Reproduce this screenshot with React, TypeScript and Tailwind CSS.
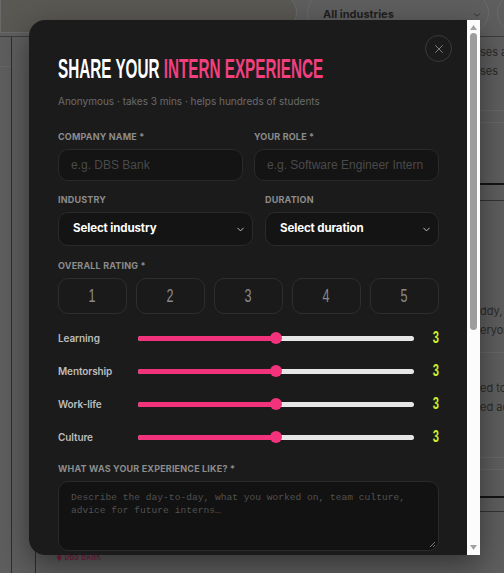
import { X, ChevronDown } from "lucide-react";

const condensed = "font-['Liberation_Sans',sans-serif]";

function Background() {
  return (
    <div className="flex h-full flex-col bg-[#5e5e5e] font-['Inter',sans-serif]">
      {/* filter bar */}
      <div className="flex h-[37px] shrink-0 items-end border-b border-[#3c3c3c]">
        <div className="mb-[3px] h-[40px] w-[297px] shrink-0 rounded-r-full border border-[#6a6a6a] bg-[#595853]" />
        <div className="mb-[3px] ml-[10px] flex h-[40px] w-[182px] shrink-0 items-center justify-between rounded-full border border-[#6a6a6a] pl-[15px] pr-[6px] pt-[3px]">
          <span className="text-[11px] font-bold text-[#1f1f1f]">All industries</span>
          <ChevronDown className="h-[10px] w-[10px] text-[#2a2a2a]" strokeWidth={2} />
        </div>
        <div className="mb-[3px] ml-[8px] h-[40px] w-[40px] shrink-0 rounded-l-full border border-[#6a6a6a]" />
      </div>

      <div className="flex flex-1">
        <div className="w-[12px] shrink-0 border-r border-[#2e2e2e]">
          <div className="h-[30px] border-b border-[#666]" />
        </div>
        <div className="w-[24px] shrink-0 border-r border-[#2e2e2e]" />
        <div className="flex flex-1 flex-col">
          <div className="ml-[444px] flex flex-col overflow-hidden whitespace-nowrap text-[11px] leading-[19px] text-[#2a2a2a]">
            <div className="pt-[6px]">ses a</div>
            <div>ses</div>
            <div className="mt-[29px] border-t border-[#676767]" />
            <div className="mt-[11px] border-t border-[#676767]" />
            <div className="mt-[60px] h-[2px] bg-[#141414]" />
            <div className="mt-[15px] border-t border-[#333]" />
            <div className="mt-[101px]">ddy,</div>
            <div>eryor</div>
            <div className="mt-[12px] border-t border-[#676767]" />
            <div className="mt-[26px]">ed to</div>
            <div>ed ac</div>
            <div className="mt-[40px] border-t border-[#676767]" />
            <div className="mt-[11px] border-t border-[#676767]" />
            <div className="mt-[26px] h-[2px] bg-[#141414]" />
            <div className="mt-[13px] border-t border-[#333]" />
          </div>
          <div className="ml-[21px] mt-auto pb-[7px]">
            <span className={`${condensed} inline-block origin-left scale-x-[0.62] whitespace-nowrap text-[10px] font-bold tracking-[0.08em] text-[#7f2446]`}>
              ◆ DBS BANK
            </span>
          </div>
        </div>
      </div>
    </div>
  );
}

function Label({ children }: { children: React.ReactNode }) {
  return (
    <div className="mb-[7px] text-[9px] font-bold uppercase leading-[11px] tracking-[0.02em] text-[#8c8c8c]">
      {children}
    </div>
  );
}

function ScrollBar() {
  return (
    <div className="flex w-[13px] shrink-0 flex-col items-center bg-[#fcfcfc] py-[5px]">
      <svg width="7" height="5" viewBox="0 0 7 5">
        <path d="M3.5 0L7 5H0z" fill="#a3a3a3" />
      </svg>
      <div className="mt-[3px] h-[297px] w-[7px] rounded-full bg-[#9d9d9d]" />
      <div className="flex-1" />
      <svg width="7" height="5" viewBox="0 0 7 5">
        <path d="M0 0h7L3.5 5z" fill="#a3a3a3" />
      </svg>
    </div>
  );
}

const sliders = ["Learning", "Mentorship", "Work-life", "Culture"];

const inputBox =
  "flex h-[32px] items-center rounded-[10px] border border-[#2a2a2a] bg-[#141414] px-[12px] font-['Liberation_Sans',sans-serif] text-[12px] text-[#4a4a4a]";
const selectBox =
  "flex h-[34px] items-center justify-between rounded-[10px] border border-[#2a2a2a] bg-[#141414] pl-[14px] pr-[6px] text-[11.5px] font-bold tracking-[-0.01em] text-white";

export default function App() {
  return (
    <div className="relative h-[573px] w-[504px] overflow-hidden">
      <Background />

      <div className="absolute left-[29px] top-[20px] flex h-[535px] w-[451px] shadow-[0_10px_30px_rgba(0,0,0,0.45)] rounded-l-2xl">
        <div className="relative w-[438px] shrink-0 overflow-hidden rounded-l-2xl bg-[#1b1b1b] pl-[29px] pr-[28px] pt-[36px] font-['Inter',sans-serif]">
          <button className="absolute right-[15px] top-[15px] flex h-[27px] w-[27px] items-center justify-center rounded-full border border-[#3a3a3a] text-[#8a8a8a]">
            <X className="h-[14px] w-[14px]" strokeWidth={1.5} />
          </button>

          <h2 className={`${condensed} origin-left scale-x-[0.545] whitespace-nowrap text-[28px] font-bold leading-[26px] text-white`}>
            SHARE YOUR <span className="text-[#f2407f]">INTERN EXPERIENCE</span>
          </h2>
          <p className="mt-[12px] text-[10px] leading-[14px] text-[#6b6b6b]">
            Anonymous · takes 3 mins · helps hundreds of students
          </p>

          <div className="mt-[23px] grid grid-cols-2 gap-[11px]">
            <div>
              <Label>Company name *</Label>
              <div className={inputBox}>e.g. DBS Bank</div>
            </div>
            <div>
              <Label>Your role *</Label>
              <div className={inputBox}>e.g. Software Engineer Intern</div>
            </div>
          </div>

          <div className="mt-[13px] flex gap-[12px]">
            <div className="w-[195px]">
              <Label>Industry</Label>
              <div className={selectBox}>
                Select industry
                <ChevronDown className="h-[11px] w-[11px] text-[#cfcfcf]" strokeWidth={2} />
              </div>
            </div>
            <div className="flex-1">
              <Label>Duration</Label>
              <div className={selectBox}>
                Select duration
                <ChevronDown className="h-[11px] w-[11px] text-[#cfcfcf]" strokeWidth={2} />
              </div>
            </div>
          </div>

          <div className="mt-[14px]">
            <Label>Overall rating *</Label>
            <div className="grid grid-cols-5 gap-[9px]">
              {[1, 2, 3, 4, 5].map((n) => (
                <div
                  key={n}
                  className={`${condensed} flex h-[36px] items-center justify-center rounded-[10px] border border-[#2e2e2e] bg-[#1a1a1a] text-[18px] text-[#8a8a8a]`}
                >
                  <span className="inline-block scale-x-[0.7]">{n}</span>
                </div>
              ))}
            </div>
          </div>

          <div className="mt-[17px] flex flex-col gap-[19px]">
            {sliders.map((s) => (
              <div key={s} className="flex h-[14px] items-center">
                <span className="w-[80px] shrink-0 text-[10px] font-semibold tracking-[-0.01em] text-[#bdbdbd]">{s}</span>
                <div className="relative h-[5px] flex-1 rounded-full bg-[#e6e6e6]">
                  <div className="h-full w-1/2 rounded-full bg-[#f2327a]" />
                  <div className="absolute left-1/2 top-1/2 h-[12px] w-[12px] -translate-x-1/2 -translate-y-1/2 rounded-full bg-[#f2327a]" />
                </div>
                <span className={`${condensed} w-[25px] shrink-0 text-right text-[16px] font-bold text-[#c8ee2c]`}>
                  <span className="inline-block origin-right scale-x-[0.7]">3</span>
                </span>
              </div>
            ))}
          </div>

          <div className="mt-[19px]">
            <Label>What was your experience like? *</Label>
            <div className="relative h-[70px] rounded-[10px] border border-[#2a2a2a] bg-[#121212] px-[12px] pt-[9px] font-['Liberation_Mono',monospace] text-[9.6px] leading-[13px] text-[#515151]">
              Describe the day-to-day, what you worked on, team culture,
              <br />
              advice for future interns…
              <svg className="absolute bottom-[2px] right-[2px]" width="7" height="7" viewBox="0 0 7 7">
                <path d="M6 1L1 6M6 4L4 6" stroke="#777" strokeWidth="1" />
              </svg>
            </div>
          </div>

          <div className="mt-[16px]">
            <Label>Would you recommend it? *</Label>
            <div className="grid grid-cols-3 gap-[9px]">
              {["Yes", "Maybe", "No"].map((o) => (
                <div key={o} className="flex h-[34px] items-center justify-center rounded-[10px] border border-[#2e2e2e] text-[12px] font-semibold text-[#8a8a8a]">
                  {o}
                </div>
              ))}
            </div>
          </div>
        </div>
        <ScrollBar />
      </div>
    </div>
  );
}
